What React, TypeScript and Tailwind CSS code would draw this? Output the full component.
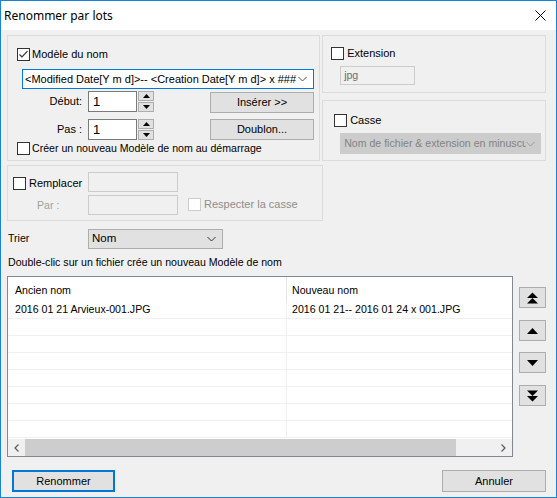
import React from "react";

function CheckBox({ checked, disabled }: { checked?: boolean; disabled?: boolean }) {
  return (
    <span
      className={`flex h-[13px] w-[13px] shrink-0 items-center justify-center border bg-white ${
        disabled ? "border-[#cccccc]" : "border-[#333333]"
      }`}
    >
      {checked && (
        <svg width="11" height="11" viewBox="0 0 11 11">
          <path d="M1.5 5.5 L4 8 L9.5 2.2" fill="none" stroke="#333333" strokeWidth="1.2" />
        </svg>
      )}
    </span>
  );
}

function Chevron({ color = "#333333" }: { color?: string }) {
  return (
    <svg width="9" height="6" viewBox="0 0 9 6" className="shrink-0">
      <path d="M0.5 1 L4.5 5 L8.5 1" fill="none" stroke={color} strokeWidth="1" />
    </svg>
  );
}

function Arrow({ dir }: { dir: "up" | "down" }) {
  return (
    <svg width="7" height="4" viewBox="0 0 7 4">
      <path d={dir === "up" ? "M0 4 L3.5 0 L7 4 Z" : "M0 0 L3.5 4 L7 0 Z"} fill="#000" />
    </svg>
  );
}

function SpinBox() {
  return (
    <div className="flex items-start">
      <div className="flex h-[21px] w-[49px] items-center border border-[#7a7a7a] bg-white pl-[4px] text-[13px] text-black">
        1
      </div>
      <div className="ml-[1px] flex h-[21px] w-[16px] flex-col">
        <div className="flex h-[10px] items-center justify-center border border-[#adadad] bg-[#e1e1e1]">
          <Arrow dir="up" />
        </div>
        <div className="mt-[1px] flex h-[10px] items-center justify-center border border-[#adadad] bg-[#e1e1e1]">
          <Arrow dir="down" />
        </div>
      </div>
    </div>
  );
}

function Button({ label, className = "" }: { label: string; className?: string }) {
  return (
    <div
      className={`flex items-center justify-center border border-[#adadad] bg-[#e1e1e1] text-[11px] text-black ${className}`}
    >
      {label}
    </div>
  );
}

function MoveButton({ kind, className = "" }: { kind: "top" | "up" | "down" | "bottom"; className?: string }) {
  const paths: Record<string, string> = {
    top: "M0 6 L5.5 0.5 L11 6 Z M0 11.5 L5.5 6 L11 11.5 Z",
    up: "M0 9 L5.5 3 L11 9 Z",
    down: "M0 3 L5.5 9 L11 3 Z",
    bottom: "M0 0.5 L5.5 6 L11 0.5 Z M0 6 L5.5 11.5 L11 6 Z",
  };
  return (
    <div className={`flex h-[21px] w-[27px] items-center justify-center border border-[#adadad] bg-[#e1e1e1] ${className}`}>
      <svg width="11" height="12" viewBox="0 0 11 12">
        <path d={paths[kind]} fill="#000" />
      </svg>
    </div>
  );
}

const rows = [
  { old: "2016 01 21 Arvieux-001.JPG", next: "2016 01 21-- 2016 01 24  x 001.JPG" },
  { old: "", next: "" },
  { old: "", next: "" },
  { old: "", next: "" },
  { old: "", next: "" },
  { old: "", next: "" },
  { old: "", next: "" },
  { old: "", next: "" },
];

export default function App() {
  return (
    <div className="flex h-[498px] w-[557px] flex-col overflow-hidden border border-[#1883d7] bg-[#f0f0f0] font-['Liberation_Sans',Arial,sans-serif] text-[10.6px] text-black">
      {/* Title bar */}
      <div className="flex h-[29px] shrink-0 items-center justify-between bg-white pl-[3px] pr-[10px]">
        <span className="font-['Noto_Sans','Open_Sans',sans-serif] text-[12px] text-black">Renommer par lots</span>
        <svg width="11" height="11" viewBox="0 0 11 11">
          <path d="M0.5 0.5 L10.5 10.5 M10.5 0.5 L0.5 10.5" stroke="#000" strokeWidth="1" />
        </svg>
      </div>

      <div className="flex flex-col pl-[6px] pr-[10px]">
        {/* Top row */}
        <div className="mt-[5px] flex gap-[2px]">
          {/* Modèle du nom */}
          <div className="flex h-[126px] w-[316px] flex-col border border-[#dcdcdc] pl-[9px]">
            <div className="mt-[12px] flex h-[13px] items-center gap-[2px]">
              <CheckBox checked />
              <span className="text-[11px]">Modèle du nom</span>
            </div>
            <div className="ml-[5px] mt-[8px] flex h-[20px] w-[292px] items-center justify-between border border-[#0078d7] bg-white pl-[2px] pr-[6px] text-[11px]">
              <span className="whitespace-nowrap">{"<Modified Date[Y m d]>-- <Creation Date[Y m d]>  x ###"}</span>
              <Chevron color="#555555" />
            </div>
            <div className="mt-[2px] flex items-start">
              <span className="w-[65px] text-right text-[11px] leading-[21px]">Début:</span>
              <div className="ml-[6px]">
                <SpinBox />
              </div>
              <Button label="Insérer >>" className="ml-[56px] mt-[1px] h-[21px] w-[104px]" />
            </div>
            <div className="mt-[6px] flex items-start">
              <span className="w-[65px] text-right text-[11px] leading-[21px]">Pas :</span>
              <div className="ml-[6px]">
                <SpinBox />
              </div>
              <Button label="Doublon..." className="ml-[56px] h-[21px] w-[104px]" />
            </div>
            <div className="mt-[2px] flex h-[13px] items-center gap-[2px]">
              <CheckBox />
              <span>Créer un nouveau Modèle de nom au démarrage</span>
            </div>
          </div>

          {/* Right column */}
          <div className="flex w-[226px] flex-col">
            <div className="flex h-[58px] flex-col border border-[#dcdcdc] pl-[8px]">
              <div className="mt-[11px] flex h-[13px] items-center gap-[3px]">
                <CheckBox />
                <span className="text-[11px]">Extension</span>
              </div>
              <div className="ml-[9px] mt-[6px] flex h-[19px] w-[75px] items-center border border-[#cccccc] bg-[#f0f0f0] pl-[3px] text-[#6d6d6d]">
                jpg
              </div>
            </div>
            <div className="mt-[7px] flex h-[61px] flex-col border border-[#dcdcdc] pl-[11px]">
              <div className="mt-[13px] flex h-[13px] items-center gap-[3px]">
                <CheckBox />
                <span className="text-[11px]">Casse</span>
              </div>
              <div className="ml-[6px] mt-[6px] flex h-[21px] w-[201px] items-center justify-between overflow-hidden border border-[#cccccc] bg-[#cccccc] pl-[3px] pr-[5px] text-[#838383]">
                <span className="overflow-hidden whitespace-nowrap">Nom de fichier &amp; extension en minuscu</span>
                <Chevron color="#9a9a9a" />
              </div>
            </div>
          </div>
        </div>

        {/* Remplacer */}
        <div className="mt-[4px] flex h-[56px] w-[316px] flex-col border border-[#dcdcdc] pl-[5px]">
          <div className="mt-[6px] flex items-start">
            <div className="mt-[5px] flex h-[13px] w-[75px] items-center gap-[3px]">
              <CheckBox />
              <span className="text-[11px]">Remplacer</span>
            </div>
            <div className="h-[20px] w-[90px] border border-[#cccccc] bg-[#f0f0f0]" />
          </div>
          <div className="mt-[3px] flex items-start">
            <span className="w-[75px] pl-[24px] leading-[20px] text-[#a0a0a0]">Par :</span>
            <div className="h-[20px] w-[90px] border border-[#cccccc] bg-[#f0f0f0]" />
            <div className="ml-[10px] mt-[3px] flex h-[13px] items-center gap-[3px]">
              <CheckBox disabled />
              <span className="text-[11px] text-[#8d8d8d]">Respecter la casse</span>
            </div>
          </div>
        </div>

        {/* Trier */}
        <div className="mt-[8px] flex items-center">
          <span className="w-[81px] pl-[1px]">Trier</span>
          <div className="flex h-[20px] w-[135px] items-center justify-between border border-[#adadad] bg-[#e1e1e1] pl-[3px] pr-[6px] text-[11.5px]">
            <span>Nom</span>
            <Chevron />
          </div>
        </div>

        <div className="mt-[7px] h-[13px] pl-[1px] leading-[13px]">Double-clic sur un fichier crée un nouveau Modèle de nom</div>

        {/* List */}
        <div className="mt-[7px] flex items-start">
          <div className="flex h-[181px] w-[511px] flex-col border border-[#828790] bg-white">
            <div className="flex h-[25px] shrink-0">
              <div className="flex w-[279px] items-center border-r border-[#e5e5e5] pl-[7px] pt-[2px]">Ancien nom</div>
              <div className="flex flex-1 items-center pl-[5px] pt-[2px]">Nouveau nom</div>
            </div>
            {rows.map((r, i) => (
              <div key={i} className="flex h-[17px] shrink-0 border-b border-[#f0f0f0]">
                <div className="flex w-[279px] items-center whitespace-nowrap border-r border-[#f0f0f0] pl-[7px]">{r.old}</div>
                <div className="flex flex-1 items-center whitespace-nowrap pl-[5px]">{r.next}</div>
              </div>
            ))}
            <div className="mt-auto flex h-[17px] shrink-0 items-center bg-[#f0f0f0]">
              <div className="flex w-[17px] items-center justify-center">
                <svg width="5" height="8" viewBox="0 0 5 8">
                  <path d="M4.5 0.5 L1 4 L4.5 7.5" fill="none" stroke="#606060" strokeWidth="1.3" />
                </svg>
              </div>
              <div className="h-[17px] w-[431px] bg-[#cdcdcd]" />
              <div className="flex-1" />
              <div className="flex w-[17px] items-center justify-center">
                <svg width="5" height="8" viewBox="0 0 5 8">
                  <path d="M0.5 0.5 L4 4 L0.5 7.5" fill="none" stroke="#606060" strokeWidth="1.3" />
                </svg>
              </div>
            </div>
          </div>
          <div className="ml-[6px] flex flex-col">
            <MoveButton kind="top" className="mt-[11px]" />
            <MoveButton kind="up" className="mt-[12px]" />
            <MoveButton kind="down" className="mt-[11px]" />
            <MoveButton kind="bottom" className="mt-[12px]" />
          </div>
        </div>

        {/* Bottom buttons */}
        <div className="mt-[13px] flex justify-between">
          <div className="ml-[5px] flex h-[22px] w-[103px] items-center justify-center border-2 border-[#0078d7] bg-[#e1e1e1] text-[11px]">
            Renommer
          </div>
          <Button label="Annuler" className="h-[22px] w-[104px] text-[11px]" />
        </div>
      </div>
    </div>
  );
}
